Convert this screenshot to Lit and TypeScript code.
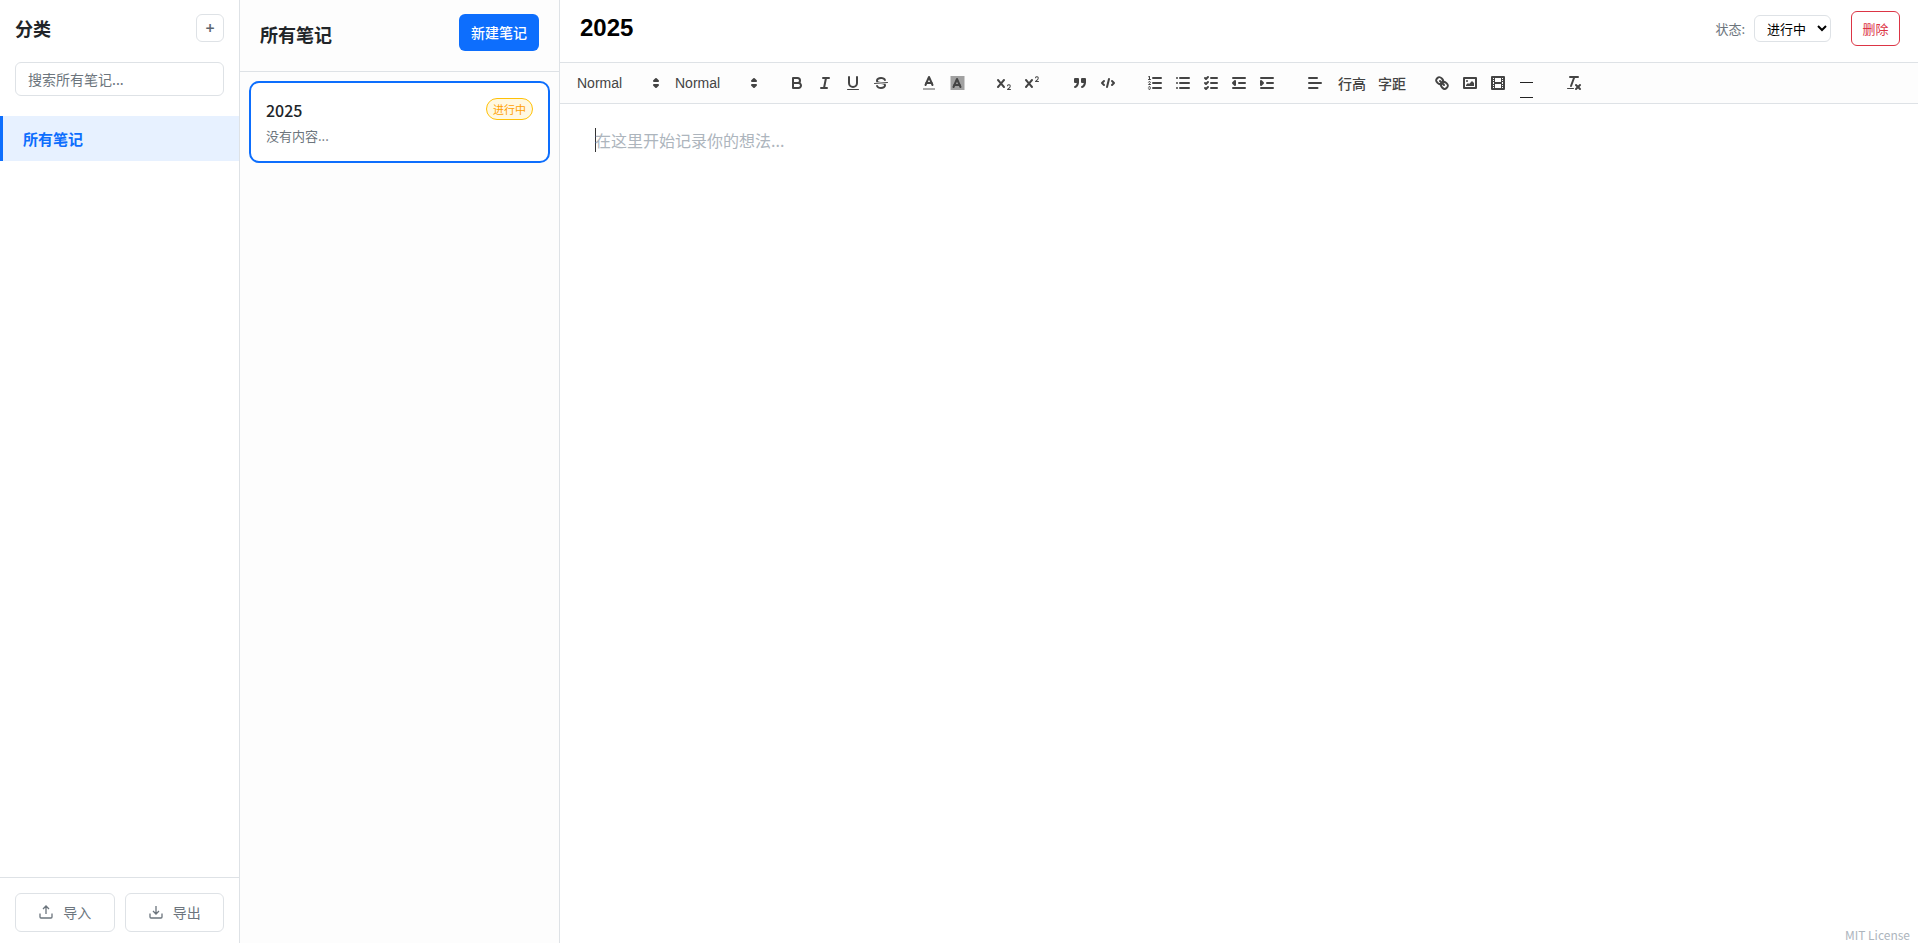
import { LitElement, html, css, svg } from "lit";
import { customElement } from "lit/decorators.js";

const ic = (body: unknown) => html`<svg class="qi" viewBox="0 0 18 18">${body}</svg>`;
const bold = ic(svg`<path class="s" d="M5,4H9.5A2.5,2.5,0,0,1,12,6.5v0A2.5,2.5,0,0,1,9.5,9H5A0,0,0,0,1,5,9V4A0,0,0,0,1,5,4Z"/><path class="s" d="M5,9h5.5A2.5,2.5,0,0,1,13,11.5v0A2.5,2.5,0,0,1,10.5,14H5a0,0,0,0,1,0,0V9A0,0,0,0,1,5,9Z"/>`);
const italic = ic(svg`<line class="s" x1="7" x2="13" y1="4" y2="4"/><line class="s" x1="5" x2="11" y1="14" y2="14"/><line class="s" x1="8" x2="10" y1="14" y2="4"/>`);
const underline = ic(svg`<path class="s" d="M5,3V9a4.012,4.012,0,0,0,4,4H9a4.012,4.012,0,0,0,4-4V3"/><rect class="f" height="1" rx="0.5" ry="0.5" width="12" x="3" y="15"/>`);
const strike = ic(svg`<line class="s thin" x1="15.5" x2="2.5" y1="8.5" y2="9.5"/><path class="f" d="M9.007,8C6.542,7.791,6,7.519,6,6.5,6,5.792,7.283,5,9,5c1.571,0,2.765.679,2.969,1.309a1,1,0,0,0,1.9-.617C13.356,4.106,11.354,3,9,3,6.2,3,4,4.538,4,6.5a3.2,3.2,0,0,0,.5,1.843Z"/><path class="f" d="M8.984,10C11.457,10.208,12,10.479,12,11.5c0,.708-1.283,1.5-3,1.5-1.571,0-2.765-.679-2.969-1.309a1,1,0,1,0-1.9.617C4.644,13.894,6.646,15,9,15c2.8,0,5-1.538,5-3.5a3.2,3.2,0,0,0-.5-1.843Z"/>`);
const color = ic(svg`<line class="s label" x1="3" x2="15" y1="15" y2="15"/><polyline class="s" points="5.5 11 9 3 12.5 11"/><line class="s" x1="11.63" x2="6.38" y1="9" y2="9"/>`);
const bg = ic(svg`<defs><pattern id="hatch" x="0.5" y="0" width="2" height="2" patternUnits="userSpaceOnUse"><rect width="1" height="1" fill="#444"/><rect x="1" y="1" width="1" height="1" fill="#444"/></pattern></defs><rect x="2.5" y="2" width="14" height="14" fill="url(#hatch)"/><polyline class="s" points="5.5 13 9 5 12.5 13"/><line class="s" x1="11.63" x2="6.38" y1="11" y2="11"/>`);
const sub = ic(svg`<path class="f" d="M15.5,15H13.861a3.858,3.858,0,0,0,1.914-2.975,1.8,1.8,0,0,0-1.6-1.751A1.921,1.921,0,0,0,12.021,11.7a0.50013,0.50013,0,1,0,.957.291h0a0.914,0.914,0,0,1,1.053-.725,0.81,0.81,0,0,1,.744.762c0,1.076-1.16971,1.86982-1.93971,2.43082A1.45639,1.45639,0,0,0,12,15.5a0.5,0.5,0,0,0,.5.5h3A0.5,0.5,0,0,0,15.5,15Z"/><path class="f" d="M9.65,5.241a1,1,0,0,0-1.409.108L6,7.964,3.759,5.349A1,1,0,0,0,2.192,6.59178Q2.21541,6.6213,2.241,6.649L4.684,9.5,2.241,12.35A1,1,0,0,0,3.71,13.70722q0.02557-.02768.049-0.05722L6,11.036,8.241,13.65a1,1,0,1,0,1.567-1.24277Q9.78459,12.3777,9.759,12.35L7.316,9.5,9.759,6.651A1,1,0,0,0,9.65,5.241Z"/>`);
const sup = ic(svg`<path class="f" d="M15.5,7H13.861a4.015,4.015,0,0,0,1.914-2.975,1.8,1.8,0,0,0-1.6-1.751A1.922,1.922,0,0,0,12.021,3.7a0.5,0.5,0,1,0,.957.291,0.917,0.917,0,0,1,1.053-.725,0.81,0.81,0,0,1,.744.762c0,1.077-1.164,1.925-1.934,2.486A1.423,1.423,0,0,0,12,7.5a0.5,0.5,0,0,0,.5.5h3A0.5,0.5,0,0,0,15.5,7Z"/><path class="f" d="M9.651,5.241a1,1,0,0,0-1.41.108L6,7.964,3.759,5.349a1,1,0,1,0-1.519,1.3L4.683,9.5,2.241,12.35a1,1,0,1,0,1.519,1.3L6,11.036,8.241,13.65a1,1,0,0,0,1.519-1.3L7.317,9.5,9.759,6.651A1,1,0,0,0,9.651,5.241Z"/>`);
const quote = ic(svg`<rect class="f s" height="3" width="3" x="4" y="5"/><rect class="f s" height="3" width="3" x="11" y="5"/><path class="f s" d="M7,8c0,4.031-3,5-3,5"/><path class="f s" d="M14,8c0,4.031-3,5-3,5"/>`);
const code = ic(svg`<polyline class="s" points="5 7 3 9 5 11"/><polyline class="s" points="13 7 15 9 13 11"/><line class="s" x1="10" x2="8" y1="5" y2="13"/>`);
const ol = ic(svg`<line class="s" x1="7" x2="15" y1="4" y2="4"/><line class="s" x1="7" x2="15" y1="9" y2="9"/><line class="s" x1="7" x2="15" y1="14" y2="14"/><line class="s thin" x1="2.5" x2="4.5" y1="5.5" y2="5.5"/><path class="f" d="M3.5,6A0.5,0.5,0,0,1,3,5.5V3.085l-0.276.138A0.5,0.5,0,0,1,2.053,3c-0.124-.247-0.023-0.324.224-0.447l1-.5A0.5,0.5,0,0,1,4,2.5v3A0.5,0.5,0,0,1,3.5,6Z"/><path class="s thin" d="M4.5,10.5h-2c0-.234,1.85-1.076,1.85-2.234A0.959,0.959,0,0,0,2.5,8.156"/><path class="s thin" d="M2.5,14.846a0.959,0.959,0,0,0,1.85-.109A0.7,0.7,0,0,0,3.75,14a0.688,0.688,0,0,0,.6-0.736,0.959,0.959,0,0,0-1.85-.109"/>`);
const ul = ic(svg`<line class="s" x1="6" x2="15" y1="4" y2="4"/><line class="s" x1="6" x2="15" y1="9" y2="9"/><line class="s" x1="6" x2="15" y1="14" y2="14"/><line class="s" x1="3" x2="3" y1="4" y2="4"/><line class="s" x1="3" x2="3" y1="9" y2="9"/><line class="s" x1="3" x2="3" y1="14" y2="14"/>`);
const check = ic(svg`<line class="s" x1="9" x2="15" y1="4" y2="4"/><polyline class="s" points="3 4 4 5 6 3"/><line class="s" x1="9" x2="15" y1="14" y2="14"/><polyline class="s" points="3 14 4 15 6 13"/><line class="s" x1="9" x2="15" y1="9" y2="9"/><polyline class="s" points="3 9 4 10 6 8"/>`);
const hl = svg`<line class="s" x1="3" x2="15" y1="14" y2="14"/><line class="s" x1="3" x2="15" y1="4" y2="4"/><line class="s" x1="9" x2="15" y1="9" y2="9"/>`;
const outdent = ic(svg`${hl}<polyline class="f s" points="5 7 5 11 3 9 5 7"/>`);
const indent = ic(svg`${hl}<polyline class="f s" points="3 7 3 11 5 9 3 7"/>`);
const align = ic(svg`<line class="s" x1="3" x2="15" y1="9" y2="9"/><line class="s" x1="3" x2="11" y1="4" y2="4"/><line class="s" x1="3" x2="11.5" y1="14" y2="14"/>`);
const link = ic(svg`<line class="s" x1="7" x2="11" y1="7" y2="11"/><path class="s" d="M8.9,4.577a3.476,3.476,0,0,1,.36,4.679A3.476,3.476,0,0,1,4.577,8.9C3.185,7.5,2.035,6.4,4.217,4.217S7.5,3.185,8.9,4.577Z"/><path class="s" d="M13.423,9.1a3.476,3.476,0,0,0-4.679-.36,3.476,3.476,0,0,0,.36,4.679c1.392,1.392,2.5,2.542,4.679.36S14.815,10.5,13.423,9.1Z"/>`);
const image = ic(svg`<rect class="s" height="10" width="12" x="3" y="4"/><circle class="f" cx="6" cy="7" r="1"/><polyline class="f" points="5 12 5 11 7 9 8 10 11 7 13 9 13 12 5 12"/>`);
const video = ic(svg`<rect class="s" height="12" width="12" x="3" y="3"/><rect class="f" height="12" width="1" x="5" y="3"/><rect class="f" height="12" width="1" x="12" y="3"/><rect class="f" height="2" width="8" x="5" y="8"/><rect class="f" height="1" width="3" x="3" y="5"/><rect class="f" height="1" width="3" x="3" y="7"/><rect class="f" height="1" width="3" x="3" y="10"/><rect class="f" height="1" width="3" x="3" y="12"/><rect class="f" height="1" width="3" x="12" y="5"/><rect class="f" height="1" width="3" x="12" y="7"/><rect class="f" height="1" width="3" x="12" y="10"/><rect class="f" height="1" width="3" x="12" y="12"/>`);
const rule = html`<svg class="qi over" viewBox="0 0 18 18"><rect fill="#222" x="3" y="8" width="13" height="1"/><rect fill="#222" x="3" y="23" width="13" height="1"/></svg>`;
const clean = ic(svg`<line class="s" x1="5" x2="13" y1="3" y2="3"/><line class="s" x1="6" x2="9.35" y1="12" y2="3"/><line class="s" x1="11" x2="15" y1="11" y2="15"/><line class="s" x1="15" x2="11" y1="11" y2="15"/><rect class="f" height="1" rx="0.5" ry="0.5" width="7" x="2" y="14"/>`);
const upload = html`<svg class="ie" viewBox="0 0 16 16"><path d="M8 2v8M5 5l3-3 3 3M2 9.5V13a1 1 0 0 0 1 1h10a1 1 0 0 0 1-1V9.5"/></svg>`;
const download = html`<svg class="ie" viewBox="0 0 16 16"><path d="M8 2v8M5 7l3 3 3-3M2 9.5V13a1 1 0 0 0 1 1h10a1 1 0 0 0 1-1V9.5"/></svg>`;

@customElement("app-root")
export class AppRoot extends LitElement {
  static styles = css`
    :host {
      display: flex;
      width: 100%;
      height: 943px;
      overflow: hidden;
      background: #fff;
      color: #212529;
      font-family: "Noto Sans CJK SC", "Noto Sans", sans-serif;
      font-size: 14px;
    }
    * { box-sizing: border-box; }

    .side {
      width: 240px;
      flex: none;
      display: flex;
      flex-direction: column;
      background: #fff;
      border-right: 1px solid #dee2e6;
    }
    .side-top { padding: 14px 15px 0 15px; }
    .side-head { display: flex; align-items: center; justify-content: space-between; height: 28px; }
    .side-head h2 { margin: 0; font-size: 18px; font-weight: 700; line-height: 26px; }
    .plus {
      width: 28px; height: 28px;
      border: 1px solid #dee2e6; border-radius: 6px;
      background: #fff; color: #5c656d;
      display: flex; align-items: center; justify-content: center;
      font-size: 16px; font-weight: 600; padding: 0;
      font-family: "Noto Sans", sans-serif;
    }
    .search {
      margin-top: 20px;
      height: 34px;
      border: 1px solid #dee2e6; border-radius: 6px;
      padding: 0 12px;
      color: #6c757d;
      font-size: 14px;
      display: flex; align-items: center;
    }
    .nav { margin-top: 20px; flex: 1; }
    .nav-item {
      height: 45px;
      display: flex; align-items: center;
      padding-left: 20px;
      background: #e7f1ff;
      border-left: 3px solid #0d6efd;
      color: #0d6efd;
      font-weight: 700;
      font-size: 15px;
    }
    .side-foot {
      border-top: 1px solid #dee2e6;
      padding: 15px 15px 11px;
      display: flex; gap: 10px;
    }
    .foot-btn {
      flex: 1;
      height: 39px;
      border: 1px solid #dee2e6; border-radius: 6px;
      background: #fff;
      color: #6c757d;
      display: flex; align-items: center; justify-content: center; gap: 9px;
      font-size: 14px;
      padding-bottom: 2px;
    }
    .ie { width: 16px; height: 16px; fill: none; stroke: #6c757d; stroke-width: 1.3; }

    .list {
      width: 320px;
      flex: none;
      display: flex; flex-direction: column;
      background: #fdfdfd;
      border-right: 1px solid #dee2e6;
    }
    .list-head {
      height: 72px;
      display: flex; align-items: center; justify-content: space-between;
      padding: 0 20px;
      border-bottom: 1px solid #dee2e6;
    }
    .list-head h3 { margin: -3px 0 0; font-size: 18px; font-weight: 700; }
    .new {
      width: 80px; height: 37px;
      margin-top: -7px;
      background: #0d6efd; color: #fff;
      border-radius: 6px;
      display: flex; align-items: center; justify-content: center;
      font-size: 14px; font-weight: 500;
    }
    .cards { padding: 9px; }
    .card {
      height: 82px;
      background: #fff;
      border: 2px solid #0d6efd;
      border-radius: 10px;
      padding: 15px 15px 0 15px;
    }
    .card-top { display: flex; justify-content: space-between; align-items: flex-start; }
    .card-title { font-size: 16px; line-height: 24px; font-weight: 500; color: #212529; }
    .badge {
      height: 22px; width: 47px;
      margin-top: 0;
      border: 1px solid #ffc107; border-radius: 11px;
      background: #fff8e1; color: #ffa000;
      font-size: 11px; font-weight: 400;
      display: flex; align-items: center; justify-content: center;
    }
    .card-text { font-size: 13px; color: #6c757d; line-height: 19px; margin-top: 4px; }

    .main { flex: 1; min-width: 0; display: flex; flex-direction: column; position: relative; }
    .main-head {
      height: 63px;
      flex: none;
      display: flex; align-items: center; justify-content: space-between;
      padding: 0 18px 6px 20px;
      border-bottom: 1px solid #dee2e6;
    }
    .title {
      font-family: "Liberation Sans", Arial, sans-serif;
      font-size: 24px; font-weight: 700; color: #000;
    }
    .actions { display: flex; align-items: center; }
    .status-label { font-size: 13px; color: #6c757d; margin-right: 9px; }
    .sel {
      width: 77px; height: 27px;
      border: 1px solid #dee2e6; border-radius: 6px;
      background: #fff; color: #000;
      font-family: inherit;
      font-size: 13px;
      padding: 0 8px;
    }
    .del {
      margin-left: 20px;
      width: 49px; height: 35px;
      border: 1px solid #dc3545; border-radius: 6px;
      color: #dc3545;
      font-size: 13px;
      display: flex; align-items: center; justify-content: center;
    }

    .toolbar {
      height: 41px;
      flex: none;
      background: #fdfdfd;
      border-bottom: 1px solid #dee2e6;
      display: flex; align-items: center;
      padding-left: 9px;
      font-family: "Liberation Sans", Arial, sans-serif;
      color: #444;
    }
    .grp { display: flex; align-items: center; margin-right: 19.5px; }
    .grp.first { margin-right: 18px; }
    .pick {
      width: 98px; height: 24px;
      display: flex; align-items: center; justify-content: space-between;
      font-size: 14px; color: #444; font-weight: 500;
      padding: 0 2px 0 8px;
    }
    .btn { width: 28px; height: 24px; padding: 3px 5px; display: flex; align-items: center; justify-content: center; flex: none; }
    .qi { width: 18px; height: 18px; display: block; flex: none; }
    .over { overflow: visible; }
    .s { fill: none; stroke: #444; stroke-width: 2; stroke-linecap: round; stroke-linejoin: round; }
    .s.thin { stroke-width: 1; }
    .s.label { stroke: #aaa; stroke-linecap: butt; }
    .f { fill: #444; }
    .pick svg polygon { fill: #444; stroke: #444; stroke-width: 2; stroke-linejoin: round; }
    .wordbtn {
      font-family: "Noto Sans CJK SC", sans-serif;
      font-size: 14px; font-weight: 500; color: #444;
      height: 24px; width: 40px; padding-left: 9.5px;
      display: flex; align-items: center; white-space: nowrap;
    }

    .editor { flex: 1; padding: 24px 35px; }
    .ph { font-size: 16px; line-height: 24px; color: #adb5bd; box-shadow: inset 1px 0 0 #333; display: inline-block; height: 24px; }
    .mit {
      position: absolute; right: 8px; bottom: 0;
      font-size: 12px; line-height: 17px;
      color: #adb5bd;
    }
  `;

  render() {
    const caret = html`<svg class="qi" viewBox="0 0 18 18"><polygon points="7 11 9 13 11 11 7 11"/><polygon points="7 7 9 5 11 7 7 7"/></svg>`;
    const b = (i: unknown) => html`<span class="btn">${i}</span>`;
    return html`
      <aside class="side">
        <div class="side-top">
          <div class="side-head"><h2>分类</h2><button class="plus">+</button></div>
          <div class="search">搜索所有笔记...</div>
        </div>
        <nav class="nav"><div class="nav-item">所有笔记</div></nav>
        <div class="side-foot">
          <div class="foot-btn">${upload}<span>导入</span></div>
          <div class="foot-btn">${download}<span>导出</span></div>
        </div>
      </aside>
      <section class="list">
        <div class="list-head"><h3>所有笔记</h3><div class="new">新建笔记</div></div>
        <div class="cards">
          <div class="card">
            <div class="card-top"><span class="card-title">2025</span><span class="badge">进行中</span></div>
            <div class="card-text">没有内容...</div>
          </div>
        </div>
      </section>
      <main class="main">
        <header class="main-head">
          <div class="title">2025</div>
          <div class="actions">
            <span class="status-label">状态:</span>
            <select class="sel"><option>进行中</option></select>
            <div class="del">删除</div>
          </div>
        </header>
        <div class="toolbar">
          <div class="grp first">
            <div class="pick">Normal${caret}</div>
            <div class="pick">Normal${caret}</div>
          </div>
          <div class="grp">${b(bold)}${b(italic)}${b(underline)}${b(strike)}</div>
          <div class="grp">${b(color)}${b(bg)}</div>
          <div class="grp">${b(sub)}${b(sup)}</div>
          <div class="grp">${b(quote)}${b(code)}</div>
          <div class="grp">${b(ol)}${b(ul)}${b(check)}${b(outdent)}${b(indent)}</div>
          <div class="grp">${b(align)}<span class="wordbtn">行高</span><span class="wordbtn">字距</span></div>
          <div class="grp">${b(link)}${b(image)}${b(video)}${b(rule)}</div>
          <div class="grp">${b(clean)}</div>
        </div>
        <div class="editor"><span class="ph">在这里开始记录你的想法...</span></div>
        <div class="mit">MIT License</div>
      </main>
    `;
  }
}
